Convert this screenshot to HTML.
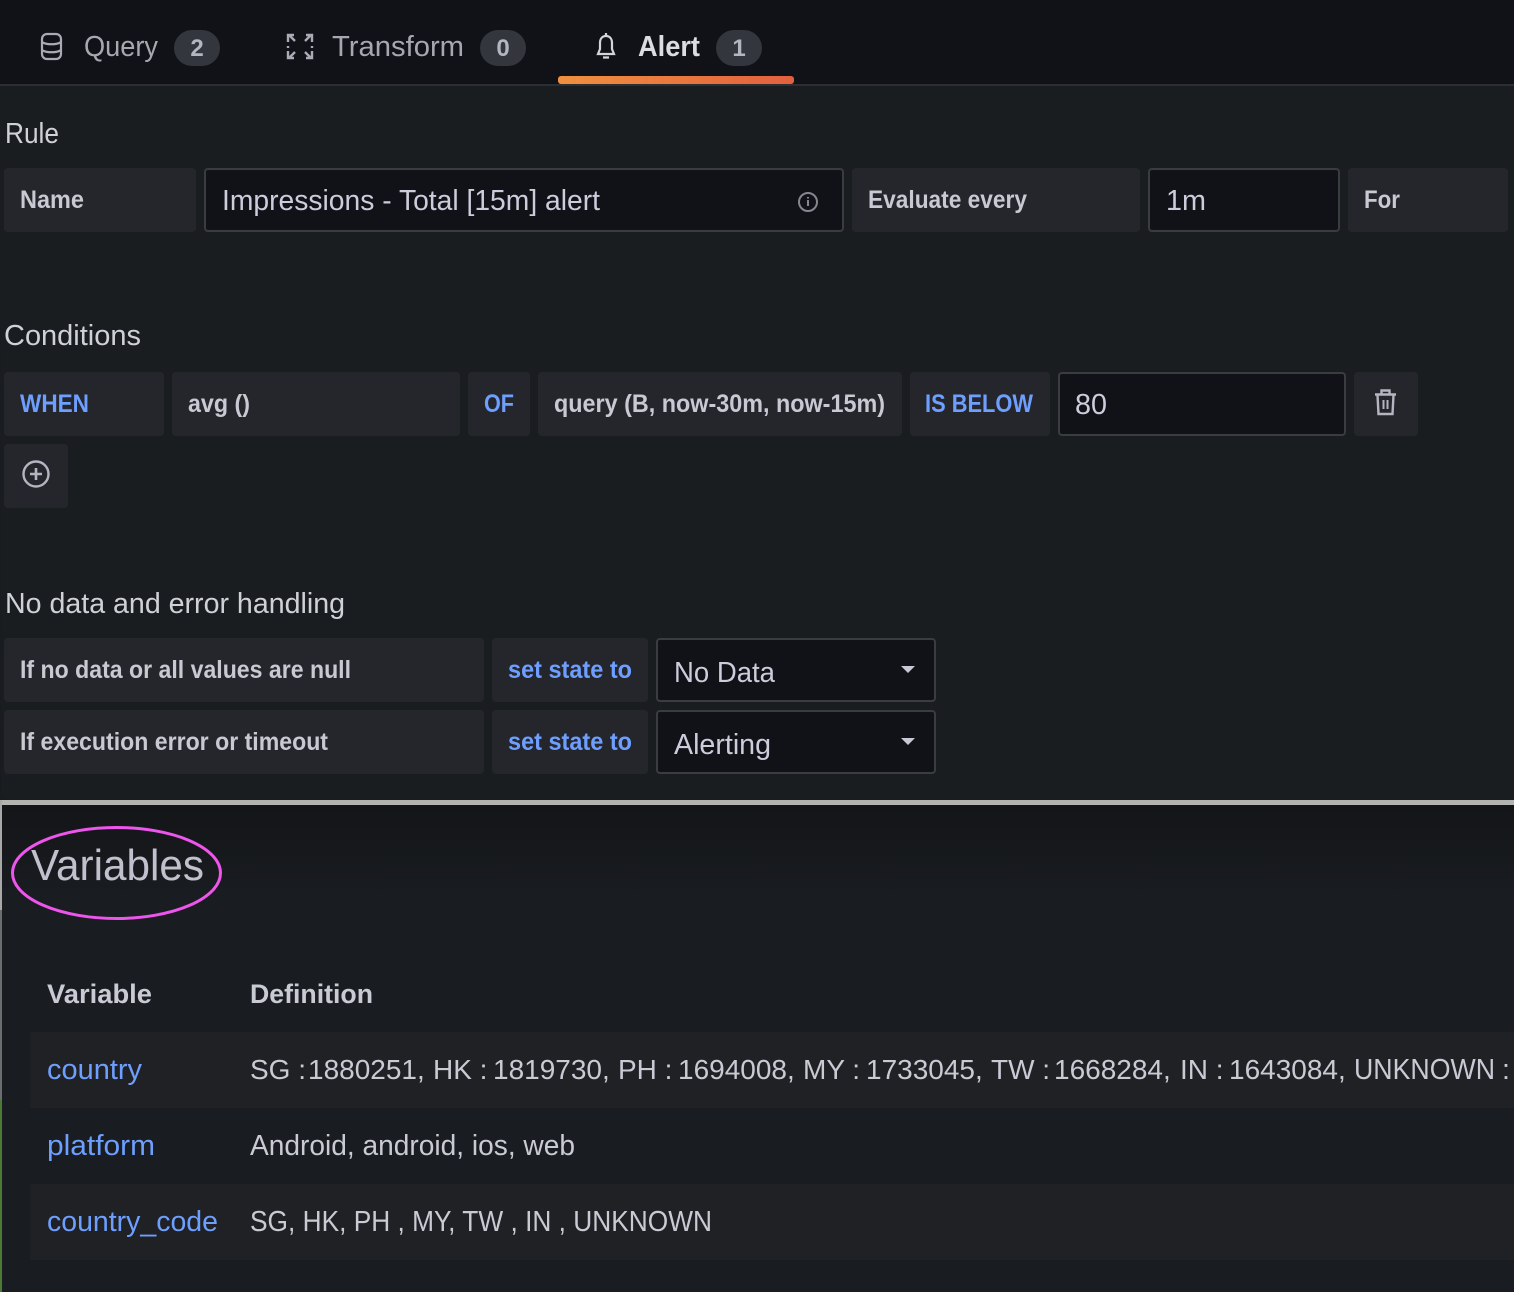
<!DOCTYPE html>
<html><head><meta charset="utf-8">
<style>
html,body{margin:0;padding:0;background:#181b1f;width:1514px;height:1292px;overflow:hidden}
svg{display:block}
text{font-family:"Liberation Sans",sans-serif;white-space:pre}
.l{fill:#c8c9d2;font-size:25px;font-weight:700}
.b{fill:#6e9fff;font-size:25px;font-weight:700}
.h{fill:#d0d1d8;font-size:28.500px}
.v{fill:#ccccdc;font-size:28.500px}
.t{fill:#c9cad4;font-size:28.500px}
.a{fill:#6e9fff;font-size:28.500px}
.n{fill:#b4b5c0;font-size:24px;font-weight:700;text-anchor:middle}
</style></head><body>
<svg width="1514" height="1292" viewBox="0 0 1514 1292" xmlns="http://www.w3.org/2000/svg">
<defs>
<linearGradient id="g" x1="0" x2="1"><stop offset="0" stop-color="#f0903f"/><stop offset="1" stop-color="#e2603f"/></linearGradient>
<linearGradient id="d" x1="0" x2="0" y1="0" y2="1"><stop offset="0" stop-color="#131518"/><stop offset="1" stop-color="#191c20"/></linearGradient>
</defs>
<rect width="1514" height="1292" fill="#181b1f"/>
<rect width="1514" height="85" fill="#111217"/>
<rect y="84" width="1514" height="2" fill="#2b2e33"/>
<rect x="558" y="76" width="236" height="8" rx="3" fill="url(#g)"/>

<!-- tabs -->
<g fill="none" stroke="#a9aab4" stroke-width="2.2">
<rect x="42" y="34" width="19" height="25" rx="5"/><path d="M42 42c4 3 15 3 19 0M42 50c4 3 15 3 19 0"/>
<path d="M288 42v-7h6M289 35l6 6M306 35h6v7M311 35l-6 6M312 51v7h-6M311 58l-6-6M294 58h-6v-7M289 58l6-6" stroke-width="2.400"/>
<path d="M288 46v2M312 46v2" stroke-width="2.400"/>
</g>
<g fill="none" stroke="#d4d5dc" stroke-width="2.200"><path d="M606 36c-4 0-6 3-6 7v6l-2 5h16l-2-5v-6c0-4-2-7-6-7z"/><path d="M603 57.500h6M606 33v3"/></g>
<text class="t" x="84" y="56" textLength="74" lengthAdjust="spacingAndGlyphs" style="fill:#a6a7b1">Query</text>
<rect x="174" y="30" width="46" height="36" rx="18" fill="#33363c"/><text class="n" x="197" y="56">2</text>
<text class="t" x="332" y="56" textLength="132" lengthAdjust="spacingAndGlyphs" style="fill:#a6a7b1">Transform</text>
<rect x="480" y="30" width="46" height="36" rx="18" fill="#33363c"/><text class="n" x="503" y="56">0</text>
<text class="t" x="638" y="56" textLength="62" lengthAdjust="spacingAndGlyphs" style="fill:#dcdde3;font-weight:700">Alert</text>
<rect x="716" y="30" width="46" height="36" rx="18" fill="#33363c"/><text class="n" x="739" y="56">1</text>

<!-- panel -->
<path d="M0 86H1514V800H10Q1 800 1 791z" fill="#1a1d20"/>

<text class="h" x="5" y="143" textLength="54" lengthAdjust="spacingAndGlyphs">Rule</text>
<g fill="#24262c">
<rect x="4" y="168" width="192" height="64" rx="4"/>
<rect x="852" y="168" width="288" height="64" rx="4"/>
<rect x="1348" y="168" width="160" height="64" rx="4"/>
<rect x="4" y="372" width="160" height="64" rx="4"/>
<rect x="172" y="372" width="288" height="64" rx="4"/>
<rect x="468" y="372" width="62" height="64" rx="4"/>
<rect x="538" y="372" width="364" height="64" rx="4"/>
<rect x="910" y="372" width="140" height="64" rx="4"/>
<rect x="1354" y="372" width="64" height="64" rx="4"/>
<rect x="4" y="444" width="64" height="64" rx="4"/>
<rect x="4" y="638" width="480" height="64" rx="4"/>
<rect x="492" y="638" width="156" height="64" rx="4"/>
<rect x="4" y="710" width="480" height="64" rx="4"/>
<rect x="492" y="710" width="156" height="64" rx="4"/>
</g>
<g fill="#111217" stroke="#3a3c42" stroke-width="2">
<rect x="205" y="169" width="638" height="62" rx="3"/>
<rect x="1149" y="169" width="190" height="62" rx="3"/>
<rect x="1059" y="373" width="286" height="62" rx="3"/>
<rect x="657" y="639" width="278" height="62" rx="3"/>
<rect x="657" y="711" width="278" height="62" rx="3"/>
</g>

<text class="l" x="20" y="208" textLength="64" lengthAdjust="spacingAndGlyphs">Name</text>
<text class="v" x="222" y="210" textLength="378" lengthAdjust="spacingAndGlyphs">Impressions - Total [15m] alert</text>
<circle cx="808" cy="202" r="9" fill="none" stroke="#85868f" stroke-width="2"/><path d="M808 200v6M808 197v1.500" stroke="#85868f" stroke-width="2"/>
<text class="l" x="868" y="208" textLength="159" lengthAdjust="spacingAndGlyphs">Evaluate every</text>
<text class="v" x="1166" y="210" textLength="40" lengthAdjust="spacingAndGlyphs">1m</text>
<text class="l" x="1364" y="208" textLength="36" lengthAdjust="spacingAndGlyphs">For</text>

<text class="h" x="4" y="345" textLength="137" lengthAdjust="spacingAndGlyphs">Conditions</text>
<text class="b" x="20" y="412" textLength="69" lengthAdjust="spacingAndGlyphs">WHEN</text>
<text class="l" x="188" y="412" textLength="62" lengthAdjust="spacingAndGlyphs">avg ()</text>
<text class="b" x="484" y="412" textLength="30" lengthAdjust="spacingAndGlyphs">OF</text>
<text class="l" x="554" y="412" textLength="331" lengthAdjust="spacingAndGlyphs">query (B, now-30m, now-15m)</text>
<text class="b" x="925" y="412" textLength="108" lengthAdjust="spacingAndGlyphs">IS BELOW</text>
<text class="v" x="1075" y="414" textLength="32" lengthAdjust="spacingAndGlyphs">80</text>
<g fill="none" stroke="#b4b5c0" stroke-width="2.400"><path d="M1375 394.500h21M1381.500 394v-3.500h8V394M1377.500 395l1 19h14l1-19"/><path d="M1383.500 400v9M1387.500 400v9" stroke-width="2"/></g>
<circle cx="36" cy="474" r="12.500" fill="none" stroke="#b4b5c0" stroke-width="2.400"/>
<path d="M36 468v12M30 474h12" stroke="#b4b5c0" stroke-width="2.600"/>

<text class="h" x="5" y="613" textLength="340" lengthAdjust="spacingAndGlyphs">No data and error handling</text>
<text class="l" x="20" y="678" textLength="331" lengthAdjust="spacingAndGlyphs">If no data or all values are null</text>
<text class="b" x="508" y="678" textLength="124" lengthAdjust="spacingAndGlyphs">set state to</text>
<text class="v" x="674" y="682" textLength="101" lengthAdjust="spacingAndGlyphs">No Data</text>
<path d="M901 666h14l-7 7z" fill="#c8c9d6"/>
<text class="l" x="20" y="750" textLength="308" lengthAdjust="spacingAndGlyphs">If execution error or timeout</text>
<text class="b" x="508" y="750" textLength="124" lengthAdjust="spacingAndGlyphs">set state to</text>
<text class="v" x="674" y="754" textLength="97" lengthAdjust="spacingAndGlyphs">Alerting</text>
<path d="M901 738h14l-7 7z" fill="#c8c9d6"/>

<!-- lower -->
<rect y="800" width="1514" height="5" fill="#b3b3b1"/>
<rect y="805" width="1514" height="487" fill="#191c20"/>
<rect y="805" width="1514" height="90" fill="url(#d)"/>
<rect x="0" y="800" width="2" height="110" fill="#a8a8a8"/>
<rect x="0" y="910" width="2" height="190" fill="#6b6d6e"/>
<rect x="0" y="1100" width="2" height="192" fill="#4b7a35"/>

<text x="31" y="880" textLength="173" lengthAdjust="spacingAndGlyphs" style="font-size:44px;fill:#c0c1cd">Variables</text>
<ellipse cx="116.500" cy="873" rx="104" ry="45.500" fill="none" stroke="#ee55ec" stroke-width="3"/>

<text class="h" x="47" y="1003" textLength="105" lengthAdjust="spacingAndGlyphs" style="font-weight:700;fill:#c9cad4;font-size:27px">Variable</text>
<text class="h" x="250" y="1003" textLength="123" lengthAdjust="spacingAndGlyphs" style="font-weight:700;fill:#c9cad4;font-size:27px">Definition</text>

<rect x="30" y="1032" width="1484" height="76" fill="#1f2125"/>
<rect x="30" y="1184" width="1484" height="76" fill="#1f2125"/>
<text class="a" x="47" y="1079" textLength="95" lengthAdjust="spacingAndGlyphs">country</text>
<text class="t" y="1079" style="font-size:28px"><tspan x="250">SG :</tspan><tspan x="308">1880251,</tspan><tspan x="433">HK :</tspan><tspan x="493">1819730,</tspan><tspan x="618">PH :</tspan><tspan x="678">1694008,</tspan><tspan x="803">MY :</tspan><tspan x="866">1733045,</tspan><tspan x="991">TW :</tspan><tspan x="1054">1668284,</tspan><tspan x="1180">IN :</tspan><tspan x="1229">1643084,</tspan></text>
<text class="t" x="1354" y="1079" textLength="141" lengthAdjust="spacingAndGlyphs">UNKNOWN</text>
<text class="t" x="1502" y="1079">:</text>
<text class="a" x="47" y="1155" textLength="108" lengthAdjust="spacingAndGlyphs">platform</text>
<text class="t" x="250" y="1155" textLength="325" lengthAdjust="spacingAndGlyphs">Android, android, ios, web</text>
<text class="a" x="47" y="1231" textLength="171" lengthAdjust="spacingAndGlyphs">country_code</text>
<text class="t" x="250" y="1231" textLength="462" lengthAdjust="spacingAndGlyphs">SG, HK, PH , MY, TW , IN , UNKNOWN</text>
</svg>
</body></html>
